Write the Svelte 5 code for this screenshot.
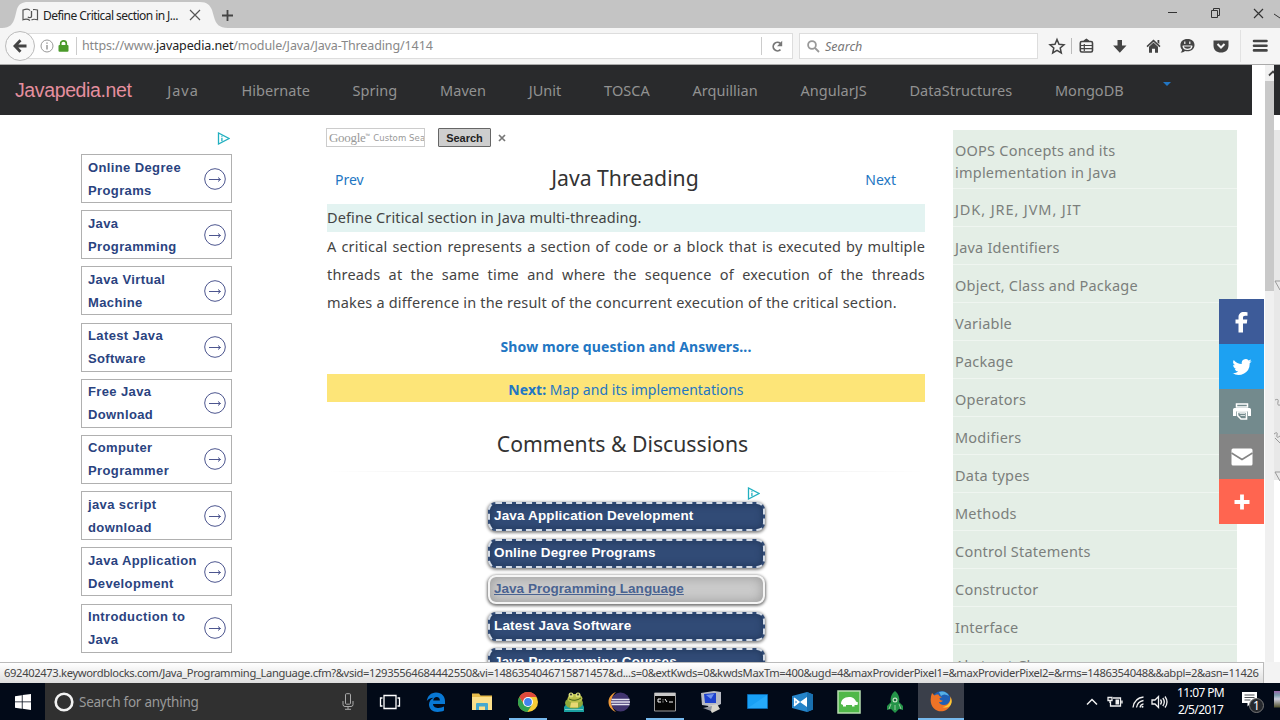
<script>
    const navLinks = ["Java", "Hibernate", "Spring", "Maven", "JUnit", "TOSCA", "Arquillian", "AngularJS", "DataStructures", "MongoDB"]

    const sideAds = [
        ["Online Degree", "Programs"],
        ["Java", "Programming"],
        ["Java Virtual", "Machine"],
        ["Latest Java", "Software"],
        ["Free Java", "Download"],
        ["Computer", "Programmer"],
        ["java script", "download"],
        ["Java Application", "Development"],
        ["Introduction to", "Java"]
    ]

    const topics = [
        "OOPS Concepts and its implementation in Java",
        "JDK, JRE, JVM, JIT",
        "Java Identifiers",
        "Object, Class and Package",
        "Variable",
        "Package",
        "Operators",
        "Modifiers",
        "Data types",
        "Methods",
        "Control Statements",
        "Constructor",
        "Interface",
        "Abstract Class"
    ]

    const keywords = [
        "Java Application Development",
        "Online Degree Programs",
        "Java Programming Language",
        "Latest Java Software",
        "Java Programming Courses"
    ]

    let hovered = $state("Java Programming Language")
</script>

{#snippet adChoices()}
    <svg width="13" height="13" viewBox="0 0 13 13" fill="none" stroke="#22b0c0">
        <path d="M1.5 1v11L12 6.5z" stroke-width="1.3" />
        <path d="M4.9 5.8v3.4M4.9 3.8v1" stroke-width="1.3" />
    </svg>
{/snippet}

<div class="screen">
    <div class="tabs">
        <svg class="tab-shape" width="226" height="28" viewBox="0 0 226 28">
            <path d="M0 28C8 28 11 24 13 17L15 9C17 4 20 2 26 2H198C205 2 208 5 210 10L212 17C214 24 217 28 226 28z" fill="#f5f5f5" />
        </svg>
        <div class="tab">
            <svg width="17" height="14" viewBox="0 0 17 14" fill="none" stroke="#555" stroke-width="1.2">
                <path d="M8 12.5C6 11 3 11 1 11.8V2C4 1 7 1 8 2.5M9.500 12C11 11 13 11 15.500 11.800V2C14 1.500 12.500 1.400 11 1.600" />
                <path d="M9.500 3v5.500c0 1.500-3 1.500-3.500.2" stroke-width="1.300" />
            </svg>
            <span class="tab-title">Define Critical section in J...</span>
            <svg width="12" height="12" viewBox="0 0 12 12" stroke="#555" stroke-width="1.2"><path d="M1 1l10 10M11 1L1 11" /></svg>
        </div>
        <svg class="new-tab" width="13" height="13" viewBox="0 0 13 13" stroke="#444" stroke-width="1.8"><path d="M6.500 1v11M1 6.500h11" /></svg>
        <svg class="window-buttons" width="112" height="28" viewBox="0 0 112 28" fill="none" stroke="#333">
            <path d="M0 12.500h9" />
            <path d="M43.500 10.500h6v7h-6zM45.500 10v-1.500h6v7h-1.500" />
            <path d="M86 9l9 9M95 9l-9 9" stroke-width="1.200" />
            <path d="M106 14l6 4" />
        </svg>
    </div>

    <div class="toolbar">
        <div class="address">
            <div class="back">
                <svg width="14" height="14" viewBox="0 0 14 14" fill="none" stroke="#444" stroke-width="2.800"><path d="M7.500 1.200L1.900 7l5.600 5.800M2.500 7H13.500" /></svg>
            </div>
            <svg class="info" width="14" height="14" viewBox="0 0 14 14" fill="none" stroke="#999">
                <circle cx="7" cy="7" r="6" /><path d="M7 6v4.500M7 3.500v1.300" stroke-width="1.500" />
            </svg>
            <svg class="lock" width="11" height="12" viewBox="0 0 11 12"><path d="M2.700 6V3.500a2.800 2.600 0 0 1 5.600 0V6" fill="none" stroke="#4b9a2b" stroke-width="1.700" /><rect x=".5" y="5" width="10" height="6.700" rx="1" fill="#4b9a2b" /></svg>
            <span class="url">https://www.<b>javapedia.net</b>/module/Java/Java-Threading/1414</span>
            <div class="reload">
                <svg width="13" height="13" viewBox="0 0 13 13"><path d="M9.500 9.700A4.300 4.300 0 1 1 9.300 3.300" fill="none" stroke="#777" stroke-width="1.800" /><path d="M11.200.8v5.400H6z" fill="#777" /></svg>
            </div>
        </div>
        <div class="search">
            <svg width="13" height="13" viewBox="0 0 13 13" fill="none" stroke="#999" stroke-width="1.800"><circle cx="5" cy="5" r="3.900" /><path d="M8 8l4 4" /></svg>
            <span>Search</span>
        </div>
        <svg class="tool-icons" width="240" height="36" viewBox="1040 28 240 36" fill="#444">
            <path d="M1057 39.500l2 4.700 5 .5-3.800 3.300 1.100 5-4.300-2.600-4.300 2.600 1.100-5-3.800-3.300 5-.5z" fill="none" stroke="#444" stroke-width="1.500" />
            <path d="M1071.500 38v16" stroke="#bbb" />
            <g fill="none" stroke="#444" stroke-width="1.600">
                <rect x="1080.300" y="41.500" width="12.200" height="10.500" rx="1.500" />
                <path d="M1081 45.500h11M1081 48.700h11M1084.300 44v7" stroke-width="1.200" />
                <path d="M1084 41.200l2.400-1.700 2.400 1.700" />
            </g>
            <path d="M1117.500 40h4.500v5.500h4.500l-6.700 7.200-6.700-7.200h4.400z" />
            <path d="M1153.500 39.500l7 6.600-1 1.200-6-5.600-6 5.600-1-1.200zM1157.500 40h1.800v4l-1.800-1.500zM1149 46.700l4.500-4.200 4.500 4.200V52.700h-3v-4h-3v4h-3z" />
            <path d="M1187.500 39c4.500 0 7 2.600 7 6s-2.800 6.300-7 6.300c-1 0-1.800-.1-2.500-.3-1.200 1-2.800 1.500-4.500 1.500 1-.7 1.500-1.600 1.600-2.700-1.200-1.200-1.700-2.800-1.700-4.800 0-3.400 2.600-6 7.100-6z" />
            <path d="M1184.800 41.500v2.500M1189.800 41.500v2.500M1182.700 46h9.600M1183 46c1 4.500 8 4.500 9 0" fill="none" stroke="#f5f5f5" stroke-width="1.200" />
            <path d="M1213.500 40.500h15v5c0 4.500-3 7-7.500 7s-7.500-2.500-7.500-7z" />
            <path d="M1217.500 44l3.500 3.500 3.500-3.500" fill="none" stroke="#f5f5f5" stroke-width="2" />
            <path d="M1240.500 30v32" stroke="#e2e2e2" />
            <path d="M1254 41h12.500M1254 45.700h12.500M1254 50.400h12.500" stroke="#444" stroke-width="2.600" stroke-linecap="round" />
        </svg>
    </div>

    <div class="viewport">
        <div class="page">
            <nav>
                <a class="brand" href="#home">Javapedia.net</a>
                {#each navLinks as link}
                    <a href="#{link}">{link}</a>
                {/each}
                <span class="caret"></span>
            </nav>

            <div class="columns">
                <aside class="ads">
                    <div class="ad-mark">{@render adChoices()}</div>
                    {#each sideAds as ad}
                        <div class="ad">
                            <span>{ad[0]}<br />{ad[1]}</span>
                            <svg width="22" height="22" viewBox="0 0 22 22" fill="none" stroke="#4d568f">
                                <circle cx="11" cy="11" r="10.300" /><path d="M5 11.500h11.500M14 9.500l2.500 2-2.500 2" />
                            </svg>
                        </div>
                    {/each}
                </aside>

                <main>
                    <div class="cse">
                        <div class="cse-input"><span class="google">Google</span><sup>™</sup><span class="custom">Custom Sea</span></div>
                        <button>Search</button>
                        <svg width="8" height="8" viewBox="0 0 8 8" stroke="#777" stroke-width="1.700"><path d="M1 1l6 6M7 1L1 7" /></svg>
                    </div>
                    <div class="heading">
                        <a href="#prev">Prev</a>
                        <h1>Java Threading</h1>
                        <a href="#next">Next</a>
                    </div>
                    <div class="question">Define Critical section in Java multi-threading.</div>
                    <p class="answer">A critical section represents a section of code or a block that is executed by multiple threads at the same time and where the sequence of execution of the threads <span>makes a difference</span> in the result of the concurrent execution of the critical section.</p>
                    <a class="more" href="#more">Show more question and Answers...</a>
                    <a class="next-topic" href="#map"><b>Next:</b> Map and its implementations</a>
                    <h2>Comments &amp; Discussions</h2>
                    <div class="rule"></div>
                    <div class="keywords">
                        <div class="keyword-mark">{@render adChoices()}</div>
                        {#each keywords as keyword}
                            <div class="keyword" class:active={keyword === hovered}><span>{keyword}</span></div>
                        {/each}
                    </div>
                </main>

                <aside class="topics">
                    {#each topics as topic}
                        <div class="topic">{topic}</div>
                    {/each}
                </aside>
            </div>
        </div>

        <div class="scrollbar">
            <svg width="10" height="16" viewBox="0 0 10 16" fill="none" stroke="#444" stroke-width="1.800"><path d="M4 10.500l4-4 4 4" /></svg>
            <div class="thumb"></div>
        </div>
        <div class="edge">
            <div class="edge-nav"></div>
            <svg width="6" height="532" viewBox="0 0 6 532" fill="none" stroke="#999">
                <path d="M1 151h6M1 151l5 9M1 342h6M1 342l5 9" />
                <path d="M1 270q4-2 3 2t2 3M0 304q4-3 3 1t3 1M1 308l5 5" />
            </svg>
        </div>

        <div class="share">
            <div class="facebook">
                <svg width="22" height="22" viewBox="0 0 22 22" fill="#fff"><path d="M7.500 21.500V12.500H4.500V8.500h3V6.200C7.500 3 9.500 1 12.800 1c1.500 0 3 .1 3.700.2v3.500h-2.300c-1.800 0-2.200.8-2.200 2v1.800h4.300l-.5 4H12v9z" /></svg>
            </div>
            <div class="twitter">
                <svg width="20" height="20" viewBox="0 0 24 24" fill="#fff"><path d="M23.600 4.900c-.8.400-1.700.6-2.700.8 1-.6 1.700-1.500 2-2.600-.9.500-1.900.9-3 1.100a4.700 4.700 0 0 0-8.100 4.300C7.900 8.300 4.500 6.500 2.100 3.600a4.700 4.700 0 0 0 1.500 6.300c-.8 0-1.500-.2-2.100-.6a4.700 4.700 0 0 0 3.700 4.700c-.7.200-1.400.2-2.100.1a4.700 4.700 0 0 0 4.400 3.300A9.500 9.500 0 0 1 .5 19.300 13.400 13.400 0 0 0 21.200 7.400c1-.7 1.800-1.500 2.400-2.500z" /></svg>
            </div>
            <div class="print">
                <svg width="18" height="18" viewBox="0 0 18 18"><path d="M3.500 1h11v3h-11z" fill="none" stroke="#fff" stroke-width="1.500" /><path d="M1.500 5h15q1.500 0 1.500 1.500V13h-3V8.500H3V13H0V6.500Q0 5 1.500 5z" fill="#fff" /><path d="M4.500 9v3.500l3.500 3.500h5.500V9z" fill="none" stroke="#fff" stroke-width="1.600" /><path d="M6.500 10.500h5.500M7.500 12.500h4.500" stroke="#d5dddd" stroke-width="1.200" /></svg>
            </div>
            <div class="mail">
                <svg width="22" height="18" viewBox="0 0 22 18" fill="#fff"><rect x=".5" y=".5" width="21" height="17" rx="1.500" /><path d="M.5 5l10.500 6.500L21.500 5" fill="none" stroke="#848484" stroke-width="1.500" /></svg>
            </div>
            <div class="add">
                <svg width="16" height="16" viewBox="0 0 16 16" stroke="#fff" stroke-width="3.800"><path d="M8 .5v15M.5 8h15" /></svg>
            </div>
        </div>
    </div>

    <div class="status"><span>692402473.keywordblocks.com/Java_Programming_Language.cfm?&amp;vsid=12935564684442550&amp;vi=1486354046715871457&amp;d...s=0&amp;extKwds=0&amp;kwdsMaxTm=400&amp;ugd=4&amp;maxProviderPixel1=&amp;maxProviderPixel2=&amp;rms=1486354048&amp;&amp;abpl=2&amp;asn=11426</span></div>

    <div class="taskbar">
        <div class="start">
            <svg width="16" height="16" viewBox="0 0 16 16" fill="#fff"><path d="M0 2.200l6.800-1v6.300H0zM7.600 1.100L16 0v7.500H7.600zM0 8.300h6.800v6.400L0 13.700zM7.600 8.300H16V16l-8.400-1.200z" /></svg>
        </div>
        <div class="cortana">
            <svg width="20" height="20" viewBox="0 0 20 20" fill="none" stroke="#f2f2f2" stroke-width="2.600"><circle cx="10" cy="10" r="8.300" /></svg>
            <span>Search for anything</span>
            <svg width="12" height="17" viewBox="0 0 12 17" fill="none" stroke="#aaa"><rect x="3.500" y=".7" width="5" height="10.500" rx="1" /><path d="M1 8v3.500q0 2 2 2h6q2 0 2-2V8M6 13.500V16M3 16.300h6" /></svg>
        </div>

        <div class="app">
            <svg width="22" height="22" viewBox="0 0 22 22" fill="none" stroke="#fff" stroke-width="1.300"><path d="M5 4.500h12v13H5zM3.500 7H1.500v8h2M18.500 7h2v8h-2" /></svg>
        </div>
        <div class="app">
            <svg width="22" height="22" viewBox="0 0 22 22"><path d="M1.800 10C2.500 5 6 1.500 11 1.500c6 0 9 4 9 9V13H8c.2 3 3 4 5.500 4 2 0 4-.5 5.500-1.400v4c-1.700 1-4 1.400-6.500 1.400-5 0-8.500-3-8.500-7.500 0-3 1.800-5.500 4.500-6.800C5.500 7 3 8 1.800 10zM8.200 9.500h6.700c0-2.300-1.200-3.500-3.200-3.500s-3.200 1.500-3.500 3.500z" fill="#0878d4" fill-rule="evenodd" /></svg>
        </div>
        <div class="app">
            <svg width="22" height="20" viewBox="0 0 22 20"><path d="M1 1.500h7l1.500 2H21V18H1z" fill="#e8bd4c" /><path d="M1 5h20v13H1z" fill="#fbe08b" /><path d="M5 18v-6q0-1 1-1h10q1 0 1 1v6h-3v-3.500H8V18z" fill="#45a9cf" /></svg>
        </div>
        <div class="app open">
            <svg width="22" height="22" viewBox="0 0 22 22"><circle cx="11" cy="11" r="10" fill="#f8cc36" /><path d="M2.300 6A10 10 0 0 1 19.700 6H11L7 13z" fill="#e0493c" /><path d="M2.300 6a10 10 0 0 0 8 15L15.300 13.500 7 13.500z" fill="#32a350" /><circle cx="11" cy="11" r="5" fill="#fff" /><circle cx="11" cy="11" r="3.900" fill="#4384ec" /></svg>
        </div>
        <div class="app">
            <svg width="22" height="22" viewBox="0 0 22 22"><path d="M1 16l3-4h15l2 4v5H1z" fill="#1ba0a0" /><ellipse cx="11" cy="12" rx="9" ry="5.500" fill="#8fa83a" /><ellipse cx="12" cy="7.500" rx="7.500" ry="4.500" fill="#b9bf4a" /><circle cx="8" cy="4" r="2.500" fill="#dbe07b" /><circle cx="15" cy="4" r="2.500" fill="#dbe07b" /><path d="M6 8q6 3 12-1" stroke="#456518" fill="none" /><path d="M8 11.500h7v5H7z" fill="#e8d873" /><circle cx="8" cy="3.500" r="1" fill="#333" /><circle cx="15" cy="3.500" r="1" fill="#333" /><path d="M2 18.500h18" stroke="#7cd0cc" /></svg>
        </div>
        <div class="app">
            <svg width="24" height="22" viewBox="0 0 24 22"><path d="M9 1C-1 5-1 17 9 21 3 16 3 6 9 1z" fill="#f09a38" /><circle cx="13.500" cy="11" r="9.500" fill="#41356f" /><path d="M4.500 8.500h18M4 11h19M4.500 13.500h18" stroke="#e6e5f2" stroke-width="1.500" /></svg>
        </div>
        <div class="app open">
            <svg width="22" height="20" viewBox="0 0 22 20"><path d="M.5 1h21v18H.5z" fill="#050505" stroke="#9c9c9c" /><path d="M1 1h20v3H1z" fill="#c9c9c9" /><path d="M4 7h3M4 10h3M4 7v3M9 7.500v.8M9 9.500v.8M11 7l2 3M15 10h4" stroke="#fff" fill="none" /></svg>
        </div>
        <div class="app">
            <svg width="22" height="24" viewBox="0 0 22 24"><path d="M1 3l13-2 7 1v12l-6 3L2 15z" fill="#b7bac3" /><path d="M4 4l12-1v10L5 13z" fill="#1e42cf" /><path d="M6 5l8-1-3 5z" fill="#7193ee" /><path d="M8 16l9-2 3 5-8 4z" fill="#d7d5cb" /><path d="M3 18l9-2-1 5z" fill="#9296a0" /></svg>
        </div>
        <div class="app">
            <svg width="21" height="16" viewBox="0 0 21 16"><path d="M.5.5h20v14H.5z" fill="#18a0f5" stroke="#0a69b0" /><path d="M1 14L20 1v13z" fill="#34b3ff" opacity=".5" /></svg>
        </div>
        <div class="app">
            <svg width="23" height="22" viewBox="0 0 23 22"><path d="M16 1l6 2.500v15L16 21 1 17V5z" fill="#2584c9" /><path d="M16 1v20l6-2.500v-15z" fill="#1970b0" /><path d="M3 7v8l5-4zM16 6v10L9 11z" fill="#fff" /><path d="M3 7l5 4-5 4" fill="none" stroke="#fff" stroke-width="1.500" /><path d="M4.500 9.500v3L6 11z" fill="#2584c9" /></svg>
        </div>
        <div class="app">
            <svg width="24" height="24" viewBox="0 0 24 24"><path d="M1 1h22v22H1z" fill="#50b849" stroke="#b6deb0" stroke-width="1.500" /><path d="M4 14c0-4 3-7 8-7 4 0 6 2 7 4.500l2 1-.5 2.500h-3v1.500h-2.500V15H9v1.500H6V15z" fill="#fff" /></svg>
        </div>
        <div class="app">
            <svg width="18" height="22" viewBox="0 0 18 22"><path d="M9 0c4 3 5 8 4 11l4 4v4l-4-1-4 4-4-4-4 1v-4l4-4C4 8 5 3 9 0z" fill="#249448" /><circle cx="9" cy="9" r="2.500" fill="#c5e3c6" /><circle cx="9" cy="9" r="1.300" fill="#17683a" /><path d="M9 14v5M5 13l-2 5M13 13l2 5" stroke="#9ac99e" /></svg>
        </div>
        <div class="app current">
            <svg width="22" height="22" viewBox="0 0 22 22"><circle cx="11.500" cy="10.500" r="9.500" fill="#1f5fb4" /><path d="M9 2q7-2 10 4-5-3-8 0z" fill="#55b0e5" /><path d="M2 3C0 8 0 14 3.500 18c5 5.500 14 4 17-3 1.300-3 1.200-6 0-9 .3 6-2.500 9-6.500 9-3 0-5-1.500-5-3 2 .5 3-.2 4-1.200-2-.3-3.500-1-3.500-2.600L12 7c-2-.2-3-1-3.500-2.500C6.500 4.300 5.300 5 4.500 5.500z" fill="#ee7326" /><path d="M20.500 7c.3 6-3 9.500-8 10 4 1.500 8 0 9-4 .5-2 0-4-1-6z" fill="#fbc937" /></svg>
        </div>

        <div class="tray">
            <svg class="tray-icons" width="84" height="20" viewBox="0 0 84 20" fill="none" stroke="#f0f0f0" stroke-width="1.300">
                <path d="M1 12.500l5-5 5 5" stroke-width="1.500" />
                <path d="M27 6h7.500v8h-10V9.500M36 8.500v3" /><path d="M29.500 7.500h3.500v5h-3.500z" fill="#eee" stroke="none" /><path d="M22 5.500h4v3h-4zM24 8.500V11" />
                <path d="M47 15.500C48 9 52 5.500 57.500 5M50.500 15.500c.6-4 3-6.300 7-7M54 15.500c.4-2 1.500-3.200 3.500-3.600" /><circle cx="56.500" cy="14.700" r="1" fill="#eee" stroke="none" />
                <path d="M66 8h3l3.500-3.500v11L69 12h-3zM74.500 7.500q2 2.500 0 5M76.800 6q3 4 0 8M79 4.500q4 5.500 0 11" />
            </svg>
            <div class="clock"><span>11:07 PM</span><span>2/5/2017</span></div>
            <svg width="24" height="24" viewBox="0 0 24 24"><path d="M1 2h15v11h-6l-3.500 3.500V13H1z" fill="#fff" /><path d="M3.500 5h10M3.500 7.500h10M3.500 10h6" stroke="#4a4f55" /><circle cx="15.500" cy="15.500" r="7" fill="#25282d" stroke="#777" /><text x="15.500" y="20" text-anchor="middle" fill="#fff" font-size="12">1</text></svg>
        </div>
        <div class="sliver"></div>
    </div>
</div>

<style>
    :global(body){
        margin: 0;
        overflow: hidden;
    }

    .screen{
        width: 1280px;
        height: 720px;
        display: flex;
        flex-direction: column;
        overflow: hidden;
        background-color: white;
        font-family: "Noto Sans", "Open Sans", sans-serif;
    }

    .screen *{
        box-sizing: border-box;
    }

    svg{
        display: block;
        flex: none;
    }

    a{
        text-decoration: none;
        color: #2276c3;
    }

    /* browser */
    .tabs{
        height: 28px;
        flex: none;
        display: flex;
        align-items: center;
        background-color: #c4c4c4;
        position: relative;
    }

    .tab-shape{
        position: absolute;
        left: 2px;
        top: 0;
    }

    .tab{
        position: relative;
        width: 221px;
        padding: 2px 0 0 22px;
        display: flex;
        align-items: center;
    }

    .tab-title{
        width: 146px;
        margin-left: 4px;
        font-size: 12px;
        letter-spacing: -0.55px;
        white-space: nowrap;
        color: #222;
    }

    .new-tab{
        margin-top: 2px;
    }

    .window-buttons{
        margin-left: auto;
    }

    .toolbar{
        height: 37px;
        flex: none;
        display: flex;
        align-items: center;
        background-color: #f5f5f5;
        border-bottom: 1px solid #aaa;
    }

    .address{
        width: 788px;
        height: 26px;
        margin-left: 5px;
        display: flex;
        align-items: center;
        background-color: white;
        border: 1px solid #ddd;
        border-left: none;
        border-radius: 14px 0 0 14px;
    }

    .back{
        width: 30px;
        height: 30px;
        flex: none;
        display: flex;
        align-items: center;
        justify-content: center;
        border: 1px solid #bbb;
        border-radius: 50%;
        background-color: #f9f9f9;
    }

    .info{
        margin-left: 5px;
    }

    .lock{
        margin-left: 4px;
    }

    .url{
        margin-left: 7px;
        padding-left: 5px;
        border-left: 1px solid #ccc;
        font-size: 12.5px;
        letter-spacing: -0.12px;
        line-height: 18px;
        white-space: nowrap;
        color: #888;
    }

    .url b{
        font-weight: 400;
        color: #222;
    }

    .reload{
        width: 31px;
        height: 18px;
        margin-left: auto;
        display: flex;
        align-items: center;
        justify-content: center;
        border-left: 1px solid #ccc;
    }

    .search{
        width: 239px;
        height: 26px;
        margin-left: 6px;
        padding-left: 7px;
        display: flex;
        align-items: center;
        gap: 5px;
        background-color: white;
        border: 1px solid #ddd;
        font-size: 12.5px;
        font-style: italic;
        color: #777;
    }

    .tool-icons{
        margin-left: 2px;
    }

    /* page */
    .viewport{
        height: 597px;
        flex: none;
        display: flex;
        position: relative;
        overflow: hidden;
    }

    .page{
        width: 1265px;
        flex: none;
    }

    nav{
        width: 1252px;
        height: 50px;
        padding-left: 15px;
        display: flex;
        align-items: center;
        gap: 42.7px;
        background-color: #292a2c;
    }

    nav a{
        font-size: 14.5px;
        letter-spacing: 0.04px;
        color: #929292;
        white-space: nowrap;
    }

    nav .brand{
        margin-right: -7px;
        font-family: "Liberation Sans", sans-serif;
        font-size: 19.5px;
        letter-spacing: -0.38px;
        color: #e58f9f;
    }

    nav .brand + a{
        letter-spacing: 1px;
    }

    .caret{
        margin: -12px 0 0 -3px;
        border: 4px solid transparent;
        border-top-color: #2276c3;
        border-bottom: none;
    }

    .columns{
        display: flex;
        align-items: flex-start;
        padding-left: 81px;
    }

    .ads{
        width: 151px;
        padding-top: 17px;
    }

    .ad-mark{
        height: 22px;
        display: flex;
        justify-content: flex-end;
        padding-right: 2px;
    }

    .ad{
        height: 49px;
        margin-bottom: 7.2px;
        padding: 0 5px 0 6px;
        display: flex;
        align-items: center;
        justify-content: space-between;
        border: 1px solid #b0b0b0;
        font-family: "Liberation Sans", sans-serif;
        font-size: 13px;
        font-weight: 700;
        letter-spacing: 0.38px;
        line-height: 23px;
        color: #2a437f;
        white-space: nowrap;
    }

    main{
        width: 598px;
        margin-left: 95px;
    }

    .cse{
        height: 46px;
        padding-top: 13px;
        display: flex;
        align-items: flex-start;
    }

    .cse-input{
        width: 99px;
        height: 19px;
        margin-left: -1px;
        padding-left: 2px;
        display: flex;
        align-items: center;
        border: 1px solid #ccc;
        overflow: hidden;
        white-space: nowrap;
        color: #999;
    }

    .google{
        font-family: "Liberation Serif", serif;
        font-size: 13px;
        letter-spacing: -0.3px;
    }

    .cse-input sup{
        font-size: 6px;
        line-height: 14px;
        align-self: flex-start;
    }

    .custom{
        margin-left: 3px;
        font-family: "DejaVu Sans", sans-serif;
        font-size: 8.5px;
        letter-spacing: 0.1px;
    }

    .cse button{
        width: 53px;
        height: 19px;
        margin-left: 13px;
        padding: 0;
        border: 1px solid #666;
        border-radius: 1px;
        background-color: #cecece;
        font-family: "Liberation Sans", sans-serif;
        font-size: 11px;
        font-weight: 700;
        color: #222;
    }

    .cse svg{
        margin: 6px 0 0 7px;
    }

    .heading{
        height: 43px;
        padding: 0 29px 0 8px;
        display: flex;
        justify-content: space-between;
        align-items: flex-start;
    }

    .heading a{
        font-size: 14px;
        line-height: 37px;
    }

    h1, h2{
        margin: 0;
        font-size: 21.2px;
        font-weight: 400;
        line-height: 33px;
        color: #333;
    }

    h1{
        padding-left: 21px;
    }

    .question, .answer{
        margin: 0;
        font-size: 14.5px;
        line-height: 28px;
        color: #444;
    }

    .question{
        background-color: #e3f3f1;
        letter-spacing: 0.1px;
        line-height: 27px;
        padding-bottom: 1px;
    }

    .answer{
        text-align: justify;
        letter-spacing: 0.18px;
    }

    .answer span{
        white-space: nowrap;
    }

    .more{
        display: block;
        margin-top: 16px;
        font-size: 14px;
        font-weight: 700;
        letter-spacing: 0.1px;
        line-height: 29px;
        text-align: center;
    }

    .next-topic{
        display: block;
        height: 28px;
        margin-top: 13px;
        background-color: #fde578;
        font-size: 14px;
        letter-spacing: 0.05px;
        line-height: 31px;
        text-align: center;
    }

    h2{
        margin-top: 25px;
        text-align: center;
        padding-right: 7px;
    }

    .rule{
        height: 1px;
        margin-top: 11px;
        background: linear-gradient(to right, transparent, #ddd, transparent);
    }

    .keywords{
        width: 277px;
        margin: 15px 0 0 161px;
    }

    .keyword-mark{
        height: 15px;
        display: flex;
        justify-content: flex-end;
        padding-right: 5px;
    }

    .keyword{
        height: 29px;
        margin-bottom: 7.5px;
        padding-left: 4px;
        border: 2px dashed #d5dce6;
        border-radius: 8px;
        background-color: #314b76;
        box-shadow: 0 1px 3px 1px #888, inset 0 0 7px #203659;
        font-family: "Liberation Sans", sans-serif;
        font-size: 13.5px;
        font-weight: 700;
        letter-spacing: 0.15px;
        line-height: 24px;
        color: white;
    }

    .keyword.active{
        border: 2px solid #f5f5f5;
        background-color: #cbcbcb;
        box-shadow: 0 1px 3px 1px #777, inset 0 0 12px #999;
        text-decoration: underline;
        letter-spacing: 0.03px;
        color: #4a6391;
    }

    .topics{
        width: 284px;
        margin: 15px 0 0 28px;
        background-color: #e4eee6;
    }

    .topic{
        padding: 9px 0 6px 2px;
        border-bottom: 1px solid #eff5f0;
        font-size: 14.5px;
        letter-spacing: 0.22px;
        line-height: 22px;
        color: #7b7f7c;
    }

    .topic:first-child{
        padding: 9px 100px 5px 2px;
    }

    /* mostly capitals, set wider than the rest */
    .topic:nth-child(2){
        letter-spacing: 0.9px;
    }

    .scrollbar{
        width: 9px;
        flex: none;
        background-color: #f0f0f0;
        overflow: hidden;
    }

    .thumb{
        height: 210px;
        background-color: #c9c9c9;
    }

    .edge{
        width: 6px;
        flex: none;
        background: linear-gradient(to bottom, #fff 65px, #e8e8e8 65px, #e8e8e8 415px, #fff 415px);
    }

    .edge-nav{
        height: 50px;
        background-color: #292a2c;
    }

    .edge svg{
        margin-top: 15px;
    }

    /* share buttons float over the page */
    .share{
        position: absolute;
        top: 234px;
        left: 1219px;
    }

    .share div{
        width: 45px;
        height: 45px;
        display: flex;
        align-items: center;
        justify-content: center;
    }

    .facebook{ background-color: #3d5b99; }
    .twitter{ background-color: #1da1f2; }
    .print{ background-color: #738a8d; }
    .mail{ background-color: #848484; }
    .add{ background-color: #ff6550; }

    .status{
        height: 21px;
        flex: none;
        background-color: #f3f3f3;
    }

    .status span{
        display: block;
        width: 1264px;
        height: 21px;
        padding-left: 4px;
        border-top: 1px solid #bbb;
        border-right: 1px solid #bbb;
        background: linear-gradient(to bottom, #fff, #dedede);
        font-size: 11.2px;
        letter-spacing: -0.355px;
        line-height: 20px;
        white-space: nowrap;
        color: #444;
    }

    /* taskbar */
    .taskbar{
        height: 37px;
        flex: none;
        display: flex;
        background-color: #020a18;
        color: white;
    }

    .start{
        width: 45px;
        display: flex;
        align-items: center;
        justify-content: center;
    }

    .cortana{
        width: 322px;
        padding: 0 13px 0 9px;
        display: flex;
        align-items: center;
        background-color: #303030;
        font-size: 13.5px;
        letter-spacing: -0.25px;
        color: #999;
    }

    .cortana span{
        flex: 1;
        margin-left: 5px;
    }

    .app{
        width: 45.9px;
        flex: none;
        display: flex;
        align-items: center;
        justify-content: center;
    }

    .app.open{
        background: linear-gradient(#76b9ed, #76b9ed) center bottom / 38px 2px no-repeat;
    }

    .app.current{
        background-color: #3a3f4a;
        border-bottom: 2px solid #76b9ed;
    }

    .tray{
        flex: 1;
        padding-left: 122px;
        display: flex;
        align-items: center;
    }

    .clock{
        width: 60px;
        margin: 0 11px 2px 0;
        padding-left: 2px;
        display: flex;
        flex-direction: column;
        align-items: center;
        font-size: 12px;
        letter-spacing: -0.6px;
        line-height: 17px;
        white-space: nowrap;
    }

    .sliver{
        width: 6px;
        background: linear-gradient(to bottom, #020a18 8px, #96a 8px, #79a 12px, #ccd 16px, #553 24px, #020a18 25px);
    }
</style>
